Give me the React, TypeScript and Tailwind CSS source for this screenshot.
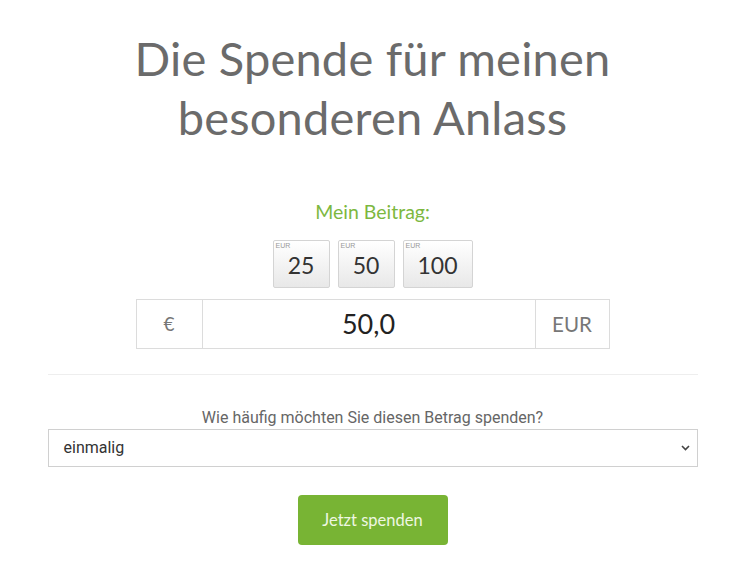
import React from "react";

export default function App() {
  const amounts = [
    { v: "25", w: "w-[57px]" },
    { v: "50", w: "w-[57px]" },
    { v: "100", w: "w-[70px]" },
  ];
  return (
    <div className="w-[756px] h-[580px] bg-white">
      <div className="w-[745px] font-['Lato',sans-serif] flex flex-col items-center">
        <h1 className="mt-[29px] text-[47px] leading-[59px] text-[#6b6b6b] text-center font-normal tracking-[0.2px]">
          Die Spende für meinen
          <br />
          besonderen Anlass
        </h1>
        <div className="mt-[53px] text-[19.5px] leading-[23px] text-[#7db83f]">Mein Beitrag:</div>
        <div className="mt-[17px] flex gap-[8px]">
          {amounts.map((a) => (
            <div
              key={a.v}
              className={`${a.w} h-[48px] relative border border-[#d4d4d4] bg-gradient-to-b from-white to-[#e8e8e8] rounded-[2px] flex items-end justify-center pb-[10px]`}
            >
              <span className="absolute left-[2px] top-[1px] text-[7px] leading-[8px] text-[#999] font-['Liberation_Sans',sans-serif]">EUR</span>
              <span className="text-[23px] leading-[23px] text-[#333]">{a.v}</span>
            </div>
          ))}
        </div>
        <div className="mt-[11px] w-[474px] h-[50px] flex border border-[#dcdcdc]">
          <div className="w-[66px] flex items-center justify-center text-[19px] text-[#777] border-r border-[#dcdcdc]">€</div>
          <div className="flex-1 flex items-center justify-center text-[27px] text-[#222]">50,0</div>
          <div className="w-[74px] flex items-center justify-center text-[20.5px] text-[#777] border-l border-[#dcdcdc]">EUR</div>
        </div>
        <div className="mt-[25px] w-[650px] h-[1px] bg-[#eeeeee]" />
        <div className="mt-[33px] text-[16px] leading-[19px] text-[#666] font-['Roboto',sans-serif]">
          Wie häufig möchten Sie diesen Betrag spenden?
        </div>
        <div className="mt-[2px] w-[650px] h-[38px] border border-[#d0d0d0] flex items-center justify-between pl-[15px] pr-[7px] font-['Roboto',sans-serif]">
          <span className="text-[16px] text-[#333]">einmalig</span>
          <svg width="9" height="6" viewBox="0 0 9 6">
            <path d="M1 1l3.5 3.5L8 1" fill="none" stroke="#444" strokeWidth="1.6" />
          </svg>
        </div>
        <button className="mt-[28px] w-[150px] h-[50px] rounded-[4px] bg-[#78b434] text-[#eef7e2] text-[16.5px]">
          Jetzt spenden
        </button>
      </div>
    </div>
  );
}
